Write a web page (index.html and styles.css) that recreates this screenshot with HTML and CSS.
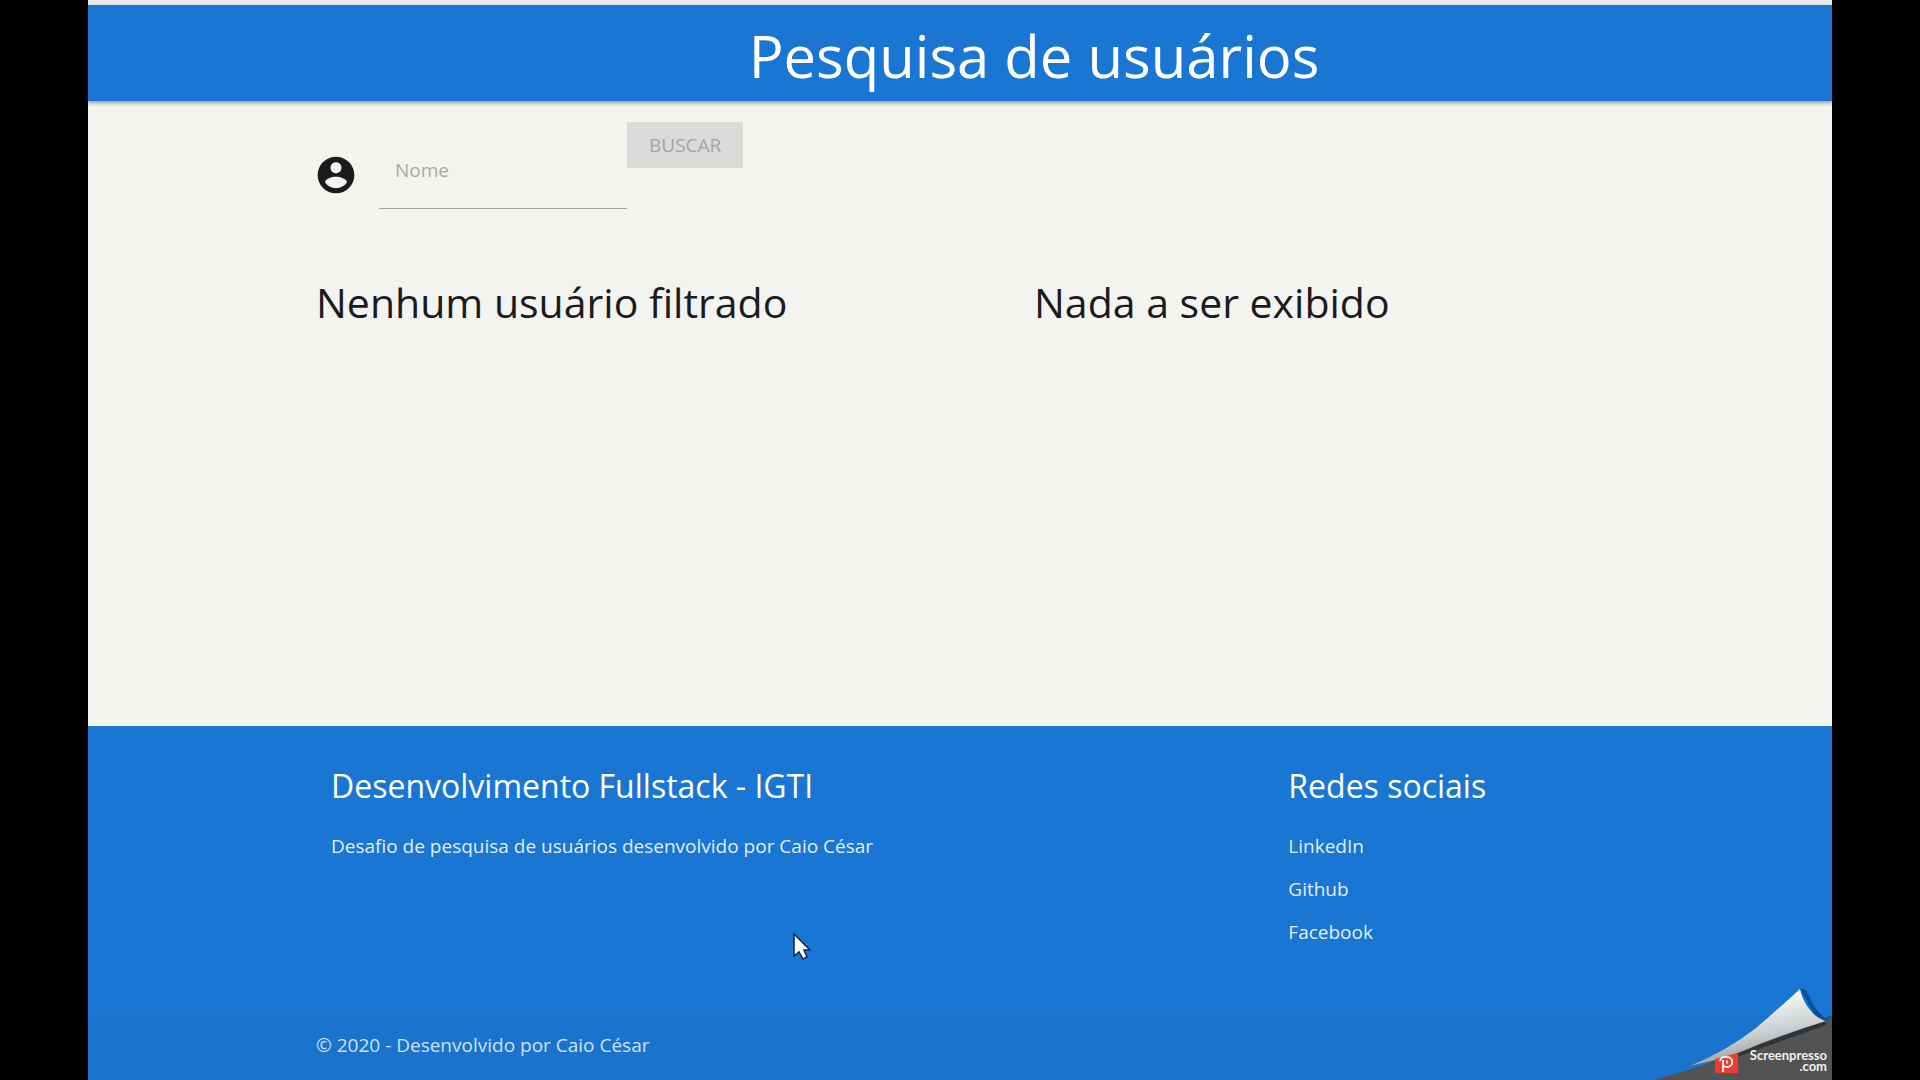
FILE: index.html
```html
<!DOCTYPE html>
<html lang="pt-BR">
<head>
<meta charset="utf-8">
<title>Pesquisa de usuários</title>
<link rel="stylesheet" href="styles.css">
</head>
<body>
<div class="page">
  <header class="top-bar">
    <h1 class="top-title">Pesquisa de usuários</h1>
  </header>
  <main class="content">
    <form class="search">
      <svg class="search-icon" viewBox="0 0 24 24" aria-hidden="true"><path d="M12 2C6.48 2 2 6.48 2 12s4.48 10 10 10 10-4.48 10-10S17.52 2 12 2zm0 3c1.66 0 3 1.34 3 3s-1.34 3-3 3-3-1.34-3-3 1.34-3 3-3zm0 14.2c-2.5 0-4.71-1.28-6-3.22.03-1.99 4-3.08 6-3.08 1.99 0 5.97 1.09 6 3.08-1.29 1.94-3.5 3.22-6 3.22z"/></svg>
      <input class="search-input" type="text" placeholder="Nome" aria-label="Nome">
      <button class="search-button" type="submit" disabled>BUSCAR</button>
    </form>
    <div class="results">
      <h2 class="result-title">Nenhum usuário filtrado</h2>
      <h2 class="result-title">Nada a ser exibido</h2>
    </div>
  </main>
  <footer class="footer">
    <div class="footer-main">
      <section class="footer-about">
        <h3 class="footer-title">Desenvolvimento Fullstack - IGTI</h3>
        <p class="footer-text">Desafio de pesquisa de usuários desenvolvido por Caio César</p>
      </section>
      <section class="footer-social">
        <h3 class="footer-title">Redes sociais</h3>
        <ul class="footer-links">
          <li><a href="#">LinkedIn</a></li>
          <li><a href="#">Github</a></li>
          <li><a href="#">Facebook</a></li>
        </ul>
      </section>
    </div>
    <div class="copyright">© 2020 - Desenvolvido por Caio César</div>
    <svg class="cursor" viewBox="0 0 18 28" aria-hidden="true"><path d="M1 1v22l5-4 4 7 4-2-3-7h6z" fill="#fff" stroke="#0c2450" stroke-width="1.5"/></svg>
    <svg class="watermark" viewBox="0 0 182 96" role="img" aria-label="Screenpresso.com">
      <defs>
        <linearGradient id="fold" x1="0.35" y1="0.2" x2="0.6" y2="1">
          <stop offset="0" stop-color="#f4f6f6"/>
          <stop offset="0.5" stop-color="#c9cdcd"/>
          <stop offset="1" stop-color="#858b8b"/>
        </linearGradient>
      </defs>
      <path d="M3 96Q52 84 92 65L175 38 182 32V96z" fill="#535353"/>
      <path d="M150 5Q156 3 160 14T175 34L182 31 175 39 166 34Z" fill="#0b4f94"/>
      <path d="M60 80L90 68L176 36V41L90 72Z" fill="#343434"/>
      <path d="M40 82Q78 66 106 44 135 19 150 5C153 20 164 34 176 37Q130 51 88 69 64 77 40 82z" fill="url(#fold)"/>
      <path d="M65 75 88 69V89H65z" fill="#f03c2e"/>
      <path d="M73 88V76M70 77Q71 72 77 73C84 73 84 83 77 83Q74 83 73 81M77 76.500v3" fill="none" stroke="#fff" stroke-width="1.800"/>
      <text class="mark-text" x="177" y="76" text-anchor="end">Screenpresso</text>
      <text class="mark-text" x="177" y="87" text-anchor="end">.com</text>
    </svg>
  </footer>
</div>
</body>
</html>
```
FILE: styles.css
```css
* {
  box-sizing: border-box;
}

body {
  margin: 0;
  background: #000;
  color: #1b1b1d;
  font-family: "Open Sans", "Noto Sans", sans-serif;
  font-size: 19px;
  line-height: 28px;
}

h1, h2, h3, p, ul {
  margin: 0;
  padding: 0;
  font-weight: 400;
}

.page {
  display: flex;
  flex-direction: column;
  min-height: 100vh;
  margin: 0 88px;
  border-top: 5px solid #ececec;
  background: #f3f3ef;
}

.top-bar,
.content,
.footer-main,
.copyright {
  padding-right: 80px;
  padding-left: 228px;
}

.top-bar {
  padding-top: 11px;
  padding-bottom: 5px;
  background: #1976d2;
  box-shadow: 0 2px 4px rgba(0, 0, 0, 0.4);
  color: #fff;
  text-align: center;
}

.top-title {
  font-size: 58px;
  line-height: 80px;
}

.content {
  flex: 1;
  padding-top: 21px;
}

.search {
  display: flex;
  align-items: flex-start;
}

.search-icon {
  width: 44px;
  height: 44px;
  margin: 31px 21px 0 -2px;
  fill: #1b1b1d;
}

.search-input {
  width: 248px;
  height: 87px;
  padding: 9px 16px 0;
  border: 0;
  border-bottom: 1px solid #a3a3a8;
  background: transparent;
  font: inherit;
}

.search-input::placeholder {
  color: #a9a9a9;
  opacity: 1;
}

.search-button {
  height: 46px;
  padding: 0 22px;
  border: 0;
  background: #dadad9;
  color: #a5a5a5;
  font: inherit;
}

.results {
  display: grid;
  grid-template-columns: 1fr 1fr;
  padding-top: 67px;
}

.result-title {
  font-size: 41px;
  line-height: 52px;
}

.footer {
  position: relative;
  background: #1976d2;
  color: #fff;
}

.footer-main {
  display: grid;
  grid-template-columns: 2fr 1fr;
  padding-top: 40px;
  padding-bottom: 69px;
}

.footer-about,
.footer-social {
  padding: 0 15px;
}

.footer-title {
  font-size: 32px;
  line-height: 40px;
}

.footer-text,
.footer-links {
  padding-top: 26px;
  color: #e3edf8;
  font-weight: 500;
}

.footer-links {
  display: grid;
  gap: 15px;
  list-style: none;
}

.footer-links a {
  color: inherit;
  text-decoration: none;
}

.copyright {
  padding-top: 16px;
  padding-bottom: 21px;
  background: #1a73cd;
  color: #cfe0f2;
  font-weight: 500;
}

.cursor {
  position: absolute;
  top: 207px;
  left: 705px;
  width: 18px;
  height: 28px;
}

.watermark {
  position: absolute;
  right: 0;
  bottom: 0;
  width: 182px;
  height: 96px;
}

.mark-text {
  fill: #f2f2f2;
  font-family: Lato, sans-serif;
  font-size: 13px;
  font-weight: 700;
}
```
